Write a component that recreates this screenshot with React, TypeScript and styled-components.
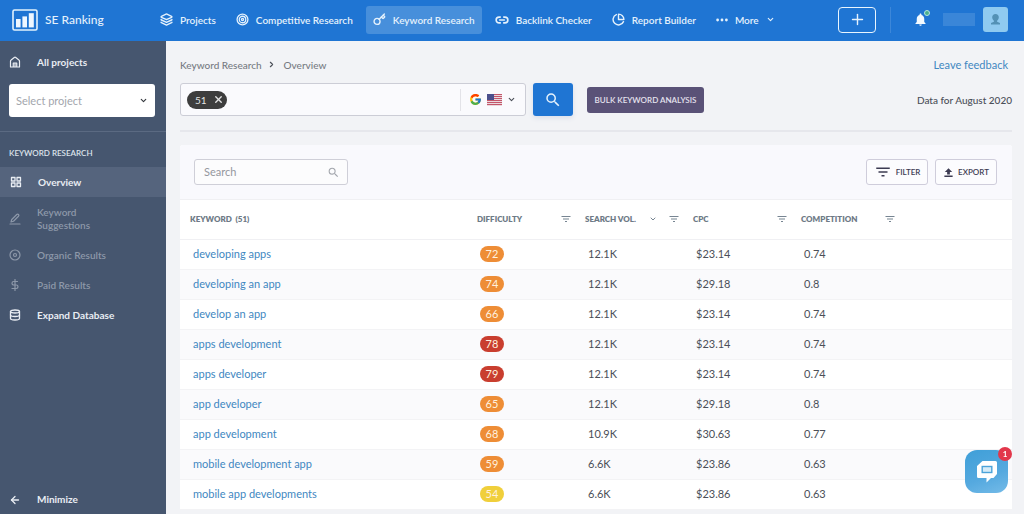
import React from 'react';
import styled, { createGlobalStyle } from 'styled-components';
import {
  FiArrowLeft,
  FiChevronDown,
  FiChevronRight,
  FiDatabase,
  FiDisc,
  FiDollarSign,
  FiGrid,
  FiPieChart,
  FiPlus,
  FiTarget,
  FiX,
} from 'react-icons/fi';
import { Key, Layers, Link2 } from 'lucide-react';
import { MdFilterList, MdNotifications, MdSearch } from 'react-icons/md';
import { FcGoogle } from 'react-icons/fc';

const GlobalStyle = createGlobalStyle`
  *, *::before, *::after { box-sizing: border-box; }
  body {
    margin: 0;
    background: #f2f3f6;
    color: #4b4f58;
    font-family: Lato, "Open Sans", sans-serif;
    font-size: 11px;
    line-height: 14px;
  }
  button, input, select {
    font: inherit;
    color: inherit;
  }
  button {
    cursor: pointer;
    padding: 0;
    border: 0;
    background: none;
  }
  a { text-decoration: none; }
  svg { display: block; flex: none; }
`;

const Page = styled.div`
  display: flex;
  flex-direction: column;
  min-height: 100vh;
`;

/* ---------- Top bar ---------- */

const TopBar = styled.header`
  display: flex;
  align-items: center;
  height: 41px;
  padding: 0 16px 2px 12px;
  background: #1f75d3;
  color: #e4f1fc;
`;

const Brand = styled.a`
  display: flex;
  align-items: center;
  gap: 7px;
  width: 141px;
  color: #e4f1fc;
  font-size: 12px;
  font-weight: 500;
`;

const Nav = styled.nav`
  display: flex;
  gap: 6px;
  flex: 1;
`;

const NavLink = styled.a<{ $active?: boolean }>`
  display: flex;
  align-items: center;
  gap: 7px;
  height: 28px;
  padding: 0 7px;
  border-radius: 3px;
  background: ${(p) => (p.$active ? '#478fdb' : 'transparent')};
  color: #e4f1fc;
  font-size: 10px;
  font-weight: 600;
  white-space: nowrap;
`;

const AddButton = styled.button`
  display: grid;
  place-items: center;
  width: 38px;
  height: 26px;
  border: 1px solid #e9f5fe;
  border-radius: 4px;
`;

const BarDivider = styled.span`
  width: 1px;
  height: 26px;
  margin: 0 22px 0 14px;
  background: #3c87d9;
`;

const BellButton = styled.button`
  position: relative;
  color: #f3faff;
`;

const BellDot = styled.span`
  position: absolute;
  top: -2px;
  right: -2px;
  width: 6px;
  height: 6px;
  border: 1px solid #b5e6dc;
  border-radius: 50%;
  background: #4bb08f;
`;

const UserName = styled.span`
  width: 32px;
  height: 13px;
  margin: 0 8px 0 15px;
  background: #3a86d8;
`;

const Avatar = styled.button`
  display: grid;
  place-items: center;
  width: 25px;
  height: 25px;
  border-radius: 3px;
  background: #8fcaf0;
  color: #5391b5;
`;

/* ---------- Sidebar ---------- */

const Body = styled.div`
  display: flex;
  flex: 1;
`;

const Sidebar = styled.aside`
  display: flex;
  flex-direction: column;
  flex: none;
  width: 166px;
  padding-top: 6px;
  background: #46566f;
`;

const SideItem = styled.a<{ $active?: boolean; $muted?: boolean; $tall?: boolean }>`
  display: flex;
  align-items: center;
  gap: 16px;
  min-height: ${(p) => (p.$tall ? '43px' : '30px')};
  padding: 0 40px 0 ${(p) => (p.$active ? '10px' : '9px')};
  background: ${(p) => (p.$active ? '#55647d' : 'transparent')};
  color: ${(p) => (p.$muted ? '#8d98a9' : '#e9edf3')};
  font-size: 10px;
  font-weight: ${(p) => (p.$muted ? 600 : 700)};
  line-height: 13px;
`;

const ProjectSelect = styled.div`
  position: relative;
  margin: 7px 11px 14px 9px;

  select {
    width: 100%;
    height: 33px;
    padding: 0 7px;
    border: 0;
    border-radius: 3px;
    background: #fff;
    color: #a3a6ad;
    appearance: none;
  }

  svg {
    position: absolute;
    top: 12px;
    right: 7px;
    color: #33373d;
    pointer-events: none;
  }
`;

const SideSection = styled.h2`
  margin: 0;
  padding: 14px 9px 7px;
  border-top: 1px solid #5b6a82;
  color: #dde3eb;
  font-size: 8px;
  font-weight: 600;
`;

const SideFooter = styled.div`
  margin-top: auto;
`;

/* ---------- Main area ---------- */

const Main = styled.main`
  flex: 1;
  min-width: 0;
  padding: 16px 12px 5px 14px;
`;

const Between = styled.div`
  display: flex;
  align-items: center;
  justify-content: space-between;
`;

const Crumbs = styled.nav`
  display: flex;
  align-items: center;
  gap: 5px;
  height: 15px;
  font-size: 10px;
  font-weight: 500;

  a, span { color: #777b83; }
  span { margin-left: 3px; }
`;

const TextLink = styled.a`
  color: #4187c1;
`;

const FeedbackLink = styled(TextLink)`
  margin-right: 4px;
`;

const SearchRow = styled(Between)`
  padding: 11px 0 14px;
  border-bottom: 2px solid #e6e7ec;
`;

const DataNote = styled.span`
  font-size: 10px;
  font-weight: 500;
`;

const SearchGroup = styled.div`
  display: flex;
  align-items: center;
`;

const KeywordField = styled.div`
  display: flex;
  align-items: center;
  width: 346px;
  height: 33px;
  padding: 0 9px 0 6px;
  border: 1px solid #cccdd6;
  border-radius: 3px;
  background: #fafafd;

  input {
    flex: 1;
    min-width: 0;
    border: 0;
    outline: 0;
    background: none;
  }
`;

const Chip = styled.span`
  display: flex;
  align-items: center;
  gap: 6px;
  height: 18px;
  padding: 0 3px 0 8px;
  border-radius: 9px;
  background: #3d3d3d;
  color: #e4e4e4;
  font-size: 10px;
`;

const EngineButton = styled.button`
  display: flex;
  align-items: center;
  gap: 5px;
  height: 22px;
  padding-left: 8px;
  border-left: 1px solid #e3e3e8;
`;

const SearchButton = styled.button`
  display: grid;
  place-items: center;
  width: 40px;
  height: 33px;
  margin: 0 14px 0 7px;
  border-radius: 3px;
  background: #1f75d3;
  color: #e4f1fc;
  box-shadow: 0 2px 5px #d9deea;
`;

const BulkButton = styled.button`
  width: 117px;
  height: 26px;
  border-radius: 3px;
  background: #5a5277;
  color: #e6e3ef;
  font-size: 8px;
  font-weight: 600;
`;

/* ---------- Results card ---------- */

const Card = styled.section`
  margin-top: 13px;
  border-radius: 3px 3px 0 0;
  background: #fff;
`;

const CardTools = styled(Between)`
  height: 55px;
  padding: 0 15px 0 14px;
  border-bottom: 1px solid #f0f0f3;
  border-radius: 3px 3px 0 0;
  background: #f9f9fd;
`;

const TableSearch = styled.label`
  display: flex;
  align-items: center;
  width: 154px;
  height: 26px;
  padding: 0 7px 0 9px;
  border: 1px solid #cfcfd8;
  border-radius: 3px;
  background: #fcfcfd;
  color: #a3a6ad;

  input {
    flex: 1;
    min-width: 0;
    padding: 0;
    border: 0;
    outline: 0;
    background: none;
  }
  input::placeholder { color: #94979e; opacity: 1; }
`;

const ToolButtons = styled.div`
  display: flex;
  gap: 7px;
`;

const ToolButton = styled.button`
  display: flex;
  align-items: center;
  justify-content: center;
  gap: 4px;
  width: 62px;
  height: 26px;
  border: 1px solid #cfcddb;
  border-radius: 3px;
  background: #fcfcfe;
  color: #3c3b52;
  font-size: 8px;
  font-weight: 600;
`;

const Table = styled.table`
  width: 100%;
  border-collapse: collapse;
  table-layout: fixed;

  .metric { width: 108px; }
  .spare { width: 113px; }
`;

const HeadCell = styled.th`
  height: 39px;
  padding: 0 3px 0 10px;
  border-bottom: 1px solid #f0f0f3;
  color: #6e7a86;
  font-size: 8px;
  font-weight: 800;
  text-align: left;
  white-space: nowrap;
`;

const HeadInner = styled.div`
  display: flex;
  align-items: center;
  gap: 11px;

  & > :first-child { margin-right: auto; }
`;

const HeadButton = styled.button`
  color: #778592;
`;

const Row = styled.tr`
  &:nth-child(even) { background: #fafafc; }
`;

const Cell = styled.td`
  height: 30px;
  padding: 0 0 0 13px;
  border-bottom: 1px solid #f3f3f5;
`;

const levelColors = { high: '#c93e2f', medium: '#ee8d36', low: '#f0cf3b' };

const Score = styled.span<{ $level: keyof typeof levelColors }>`
  display: block;
  width: 24px;
  height: 16px;
  border-radius: 8px;
  background: ${(p) => levelColors[p.$level]};
  color: #fff1df;
  line-height: 16px;
  text-align: center;
`;

/* ---------- Chat launcher ---------- */

const ChatButton = styled.button`
  position: fixed;
  right: 16px;
  bottom: 21px;
  display: grid;
  place-items: center;
  width: 43px;
  height: 43px;
  border-radius: 12px;
  background: linear-gradient(160deg, #3f9fd8, #55a9df 60%, #74bbe8);
`;

const ChatCount = styled.span`
  position: absolute;
  top: -3px;
  right: -4px;
  width: 14px;
  height: 14px;
  border-radius: 50%;
  background: #e2374b;
  color: #fff;
  font-size: 8px;
  font-weight: 700;
  line-height: 14px;
`;

/* ---------- Drawings ---------- */

const LogoMark = () => (
  <svg width="26" height="22" viewBox="0 0 26 22" fill="#eef7ff">
    <rect x="1" y="1" width="24" height="20" rx="1.5" fill="none" stroke="#e2f2fd" strokeWidth="1.6" />
    <rect x="4" y="10" width="4.6" height="8.4" />
    <rect x="10.4" y="7.4" width="4.6" height="11" />
    <rect x="16.8" y="4.2" width="5" height="14.2" />
  </svg>
);

const DotsIcon = () => (
  <svg width="12" height="12" viewBox="0 0 12 12" fill="currentColor">
    <circle cx="1.6" cy="6" r="1.4" />
    <circle cx="6" cy="6" r="1.4" />
    <circle cx="10.4" cy="6" r="1.4" />
  </svg>
);

const PersonIcon = () => (
  <svg width="11" height="13" viewBox="0 0 11 13" fill="currentColor">
    <path d="M5.5 1C3.4 1 2.2 2.4 2.2 4.2c0 1.5.8 2.8 1.7 3.5v1L1 10v1.6h9V10L7.1 8.7v-1c.9-.7 1.7-2 1.7-3.5C8.8 2.4 7.6 1 5.5 1z" />
  </svg>
);

const HomeIcon = () => (
  <svg
    width="12"
    height="12"
    viewBox="0 0 24 24"
    fill="none"
    stroke="currentColor"
    strokeWidth="2.4"
    strokeLinejoin="round"
  >
    <path d="M3 10.5c0-1 .4-1.800 1.200-2.400L10.500 3a2.500 2.500 0 0 1 3 0l6.300 5.100c.8.6 1.200 1.400 1.200 2.400V22H3z" />
    <path d="M8.500 22v-8h7v8M12 14v8" />
  </svg>
);

const PencilLineIcon = () => (
  <svg
    width="12"
    height="12"
    viewBox="0 0 24 24"
    fill="none"
    stroke="currentColor"
    strokeWidth="2.4"
    strokeLinecap="round"
    strokeLinejoin="round"
  >
    <path d="M15.500 3a2.400 2.400 0 0 1 3.500 3.500L9 16.500l-5 1.500 1.500-5z" />
    <path d="M2 22h20" />
  </svg>
);

const UploadIcon = () => (
  <svg width="11" height="11" viewBox="0 0 24 24" fill="currentColor">
    <path d="M9 16.500h6V11h5l-8-8.500L4 11h5zM3 18.500h18V22H3z" />
  </svg>
);

const FlagIcon = () => (
  <svg width="15" height="12" viewBox="0 0 15 12">
    <rect width="15" height="12" fill="#ead9de" />
    {[0, 2, 4, 6, 8, 10].map((y) => (
      <rect key={y} y={y} width="15" height="1" fill="#c4566a" />
    ))}
    <rect width="7" height="6" fill="#4b4f8c" />
  </svg>
);

const ChatIcon = () => (
  <svg width="22" height="23" viewBox="0 0 22 23">
    <path
      d="M6.500 1H19.500a1.500 1.500 0 0 1 1.500 1.500V14l-3.500 4H15l-4.500 4.500V18H2.500A1.500 1.500 0 0 1 1 16.500V6z"
      fill="#fff"
    />
    <rect x="6.200" y="6.500" width="9.600" height="6" fill="#d5ebf8" stroke="#4ba3da" strokeWidth="1.400" />
  </svg>
);

/* ---------- Data ---------- */

type Level = keyof typeof levelColors;

const rows: [string, number, Level, string, string, string][] = [
  ['developing apps', 72, 'medium', '12.1K', '$23.14', '0.74'],
  ['developing an app', 74, 'medium', '12.1K', '$29.18', '0.8'],
  ['develop an app', 66, 'medium', '12.1K', '$23.14', '0.74'],
  ['apps development', 78, 'high', '12.1K', '$23.14', '0.74'],
  ['apps developer', 79, 'high', '12.1K', '$23.14', '0.74'],
  ['app developer', 65, 'medium', '12.1K', '$29.18', '0.8'],
  ['app development', 68, 'medium', '10.9K', '$30.63', '0.77'],
  ['mobile development app', 59, 'medium', '6.6K', '$23.86', '0.63'],
  ['mobile app developments', 54, 'low', '6.6K', '$23.86', '0.63'],
];

const metrics = ['DIFFICULTY', 'SEARCH VOL.', 'CPC', 'COMPETITION'];

export default function App() {
  return (
    <Page>
      <GlobalStyle />
      <TopBar>
        <Brand href="#home">
          <LogoMark />
          SE Ranking
        </Brand>
        <Nav aria-label="Main">
          <NavLink href="#projects"><Layers size={13} strokeWidth={2.6} />Projects</NavLink>
          <NavLink href="#competitive"><FiTarget size={13} strokeWidth={2.4} />Competitive Research</NavLink>
          <NavLink href="#keyword" $active><Key size={13} strokeWidth={2.6} />Keyword Research</NavLink>
          <NavLink href="#backlink"><Link2 size={14} strokeWidth={2.8} />Backlink Checker</NavLink>
          <NavLink href="#report"><FiPieChart size={13} strokeWidth={2.6} />Report Builder</NavLink>
          <NavLink href="#more"><DotsIcon />More<FiChevronDown size={9} strokeWidth={3} /></NavLink>
        </Nav>
        <AddButton aria-label="Add project"><FiPlus size={17} /></AddButton>
        <BarDivider />
        <BellButton aria-label="Notifications">
          <MdNotifications size={15} />
          <BellDot />
        </BellButton>
        <UserName />
        <Avatar aria-label="Account"><PersonIcon /></Avatar>
      </TopBar>

      <Body>
        <Sidebar>
          <SideItem href="#all"><HomeIcon />All projects</SideItem>
          <ProjectSelect>
            <select aria-label="Select project">
              <option>Select project</option>
            </select>
            <FiChevronDown size={9} strokeWidth={3} />
          </ProjectSelect>
          <SideSection>KEYWORD RESEARCH</SideSection>
          <SideItem href="#overview" $active><FiGrid size={12} strokeWidth={2.6} />Overview</SideItem>
          <SideItem href="#suggestions" $muted $tall><PencilLineIcon />Keyword Suggestions</SideItem>
          <SideItem href="#organic" $muted><FiDisc size={12} strokeWidth={2.4} />Organic Results</SideItem>
          <SideItem href="#paid" $muted><FiDollarSign size={12} strokeWidth={2.4} />Paid Results</SideItem>
          <SideItem href="#database"><FiDatabase size={12} strokeWidth={2.6} />Expand Database</SideItem>
          <SideFooter>
            <SideItem href="#minimize"><FiArrowLeft size={12} strokeWidth={2.6} />Minimize</SideItem>
          </SideFooter>
        </Sidebar>

        <Main>
          <Between>
            <Crumbs aria-label="Breadcrumb">
              <a href="#keyword">Keyword Research</a>
              <FiChevronRight size={9} strokeWidth={3} />
              <span>Overview</span>
            </Crumbs>
            <FeedbackLink href="#feedback">Leave feedback</FeedbackLink>
          </Between>

          <SearchRow>
            <SearchGroup>
              <KeywordField>
                <Chip>
                  51
                  <button aria-label="Clear keywords"><FiX size={11} strokeWidth={3} /></button>
                </Chip>
                <input aria-label="Keywords" />
                <EngineButton aria-label="Search engine and country">
                  <FcGoogle size={13} />
                  <FlagIcon />
                  <FiChevronDown size={9} strokeWidth={3} />
                </EngineButton>
              </KeywordField>
              <SearchButton aria-label="Search"><MdSearch size={18} /></SearchButton>
              <BulkButton>BULK KEYWORD ANALYSIS</BulkButton>
            </SearchGroup>
            <DataNote>Data for August 2020</DataNote>
          </SearchRow>

          <Card>
            <CardTools>
              <TableSearch>
                <input aria-label="Search keywords" placeholder="Search" />
                <MdSearch size={13} />
              </TableSearch>
              <ToolButtons>
                <ToolButton><MdFilterList size={18} />FILTER</ToolButton>
                <ToolButton><UploadIcon />EXPORT</ToolButton>
              </ToolButtons>
            </CardTools>
            <Table>
              <colgroup>
                <col />
                {metrics.map((m) => <col key={m} className="metric" />)}
                <col className="spare" />
              </colgroup>
              <thead>
                <tr>
                  <HeadCell scope="col">KEYWORD&nbsp; (51)</HeadCell>
                  {metrics.map((m) => (
                    <HeadCell key={m} scope="col">
                      <HeadInner>
                        <span>{m}</span>
                        {m === 'SEARCH VOL.' && (
                          <HeadButton aria-label="Sort"><FiChevronDown size={8} strokeWidth={3} /></HeadButton>
                        )}
                        <HeadButton aria-label={`Filter ${m}`}><MdFilterList size={12} /></HeadButton>
                      </HeadInner>
                    </HeadCell>
                  ))}
                  <HeadCell as="td" />
                </tr>
              </thead>
              <tbody>
                {rows.map(([keyword, score, level, volume, cpc, competition]) => (
                  <Row key={keyword}>
                    <Cell><TextLink href="#result">{keyword}</TextLink></Cell>
                    <Cell><Score $level={level}>{score}</Score></Cell>
                    <Cell>{volume}</Cell>
                    <Cell>{cpc}</Cell>
                    <Cell>{competition}</Cell>
                    <Cell />
                  </Row>
                ))}
              </tbody>
            </Table>
          </Card>
        </Main>
      </Body>

      <ChatButton aria-label="Open chat">
        <ChatIcon />
        <ChatCount>1</ChatCount>
      </ChatButton>
    </Page>
  );
}
